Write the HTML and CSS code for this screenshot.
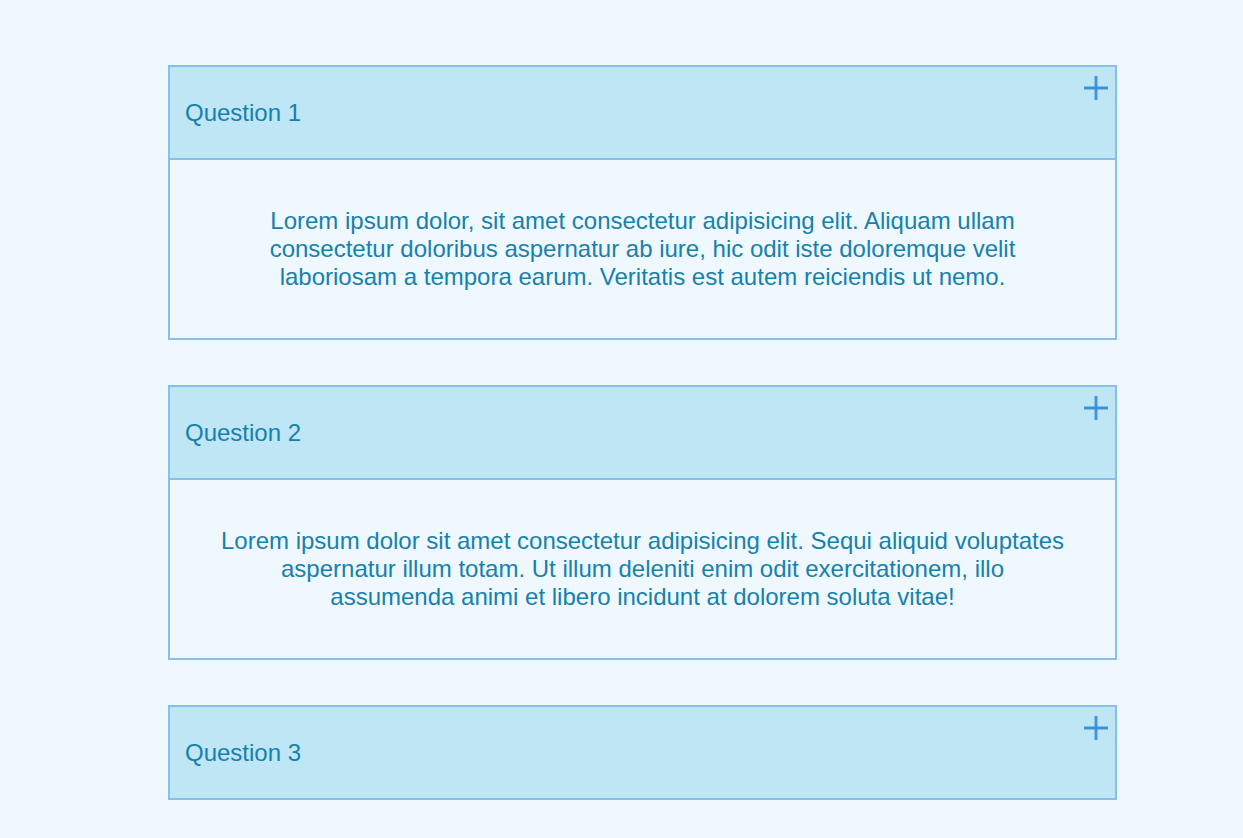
FILE: index.html
```html
<!DOCTYPE html>
<html lang="en">
<head>
<meta charset="utf-8">
<title>FAQ</title>
<link rel="stylesheet" href="styles.css">
</head>
<body>
<main class="faq">
  <section class="item">
    <div class="head">
      <span class="q">Question 1</span>
      <svg class="plus" viewBox="0 0 24 24" width="24" height="24"><path d="M12 0V24M0 12H24" stroke="#3a93e2" stroke-width="2.8" fill="none"/></svg>
    </div>
    <div class="body">
      <p>Lorem ipsum dolor, sit amet consectetur adipisicing elit. Aliquam ullam consectetur doloribus aspernatur ab iure, hic odit iste doloremque velit laboriosam a tempora earum. Veritatis est autem reiciendis ut nemo.</p>
    </div>
  </section>
  <section class="item">
    <div class="head">
      <span class="q">Question 2</span>
      <svg class="plus" viewBox="0 0 24 24" width="24" height="24"><path d="M12 0V24M0 12H24" stroke="#3a93e2" stroke-width="2.8" fill="none"/></svg>
    </div>
    <div class="body">
      <p>Lorem ipsum dolor sit amet consectetur adipisicing elit. Sequi aliquid voluptates aspernatur illum totam. Ut illum deleniti enim odit exercitationem, illo assumenda animi et libero incidunt at dolorem soluta vitae!</p>
    </div>
  </section>
  <section class="item">
    <div class="head">
      <span class="q">Question 3</span>
      <svg class="plus" viewBox="0 0 24 24" width="24" height="24"><path d="M12 0V24M0 12H24" stroke="#3a93e2" stroke-width="2.8" fill="none"/></svg>
    </div>
  </section>
</main>
</body>
</html>
```

FILE: styles.css
```css
html, body {
  margin: 0;
  padding: 0;
  background: #f0f8ff;
}
body {
  font-family: "Liberation Sans", Arial, sans-serif;
  color: #1681ad;
}
.faq {
  width: 949px;
  margin-left: 168px;
  padding-top: 65px;
  padding-bottom: 37px;
  display: flex;
  flex-direction: column;
  gap: 45px;
}
.item {
  border: 2px solid #86bfeb;
  display: flex;
  flex-direction: column;
}
.head {
  position: relative;
  background: #bee6f4;
  height: 91px;
  display: flex;
  align-items: center;
  padding-left: 15px;
  font-size: 24px;
  line-height: 28px;
}
.item .body {
  border-top: 2px solid #86bfeb;
  padding: 47px;
  min-height: 84px;
  display: flex;
  align-items: center;
  justify-content: center;
}
.body p {
  margin: 0;
  text-align: center;
  font-size: 24px;
  line-height: 28px;
}
.plus {
  position: absolute;
  top: 9px;
  right: 7px;
  width: 24px;
  height: 24px;
}
```
